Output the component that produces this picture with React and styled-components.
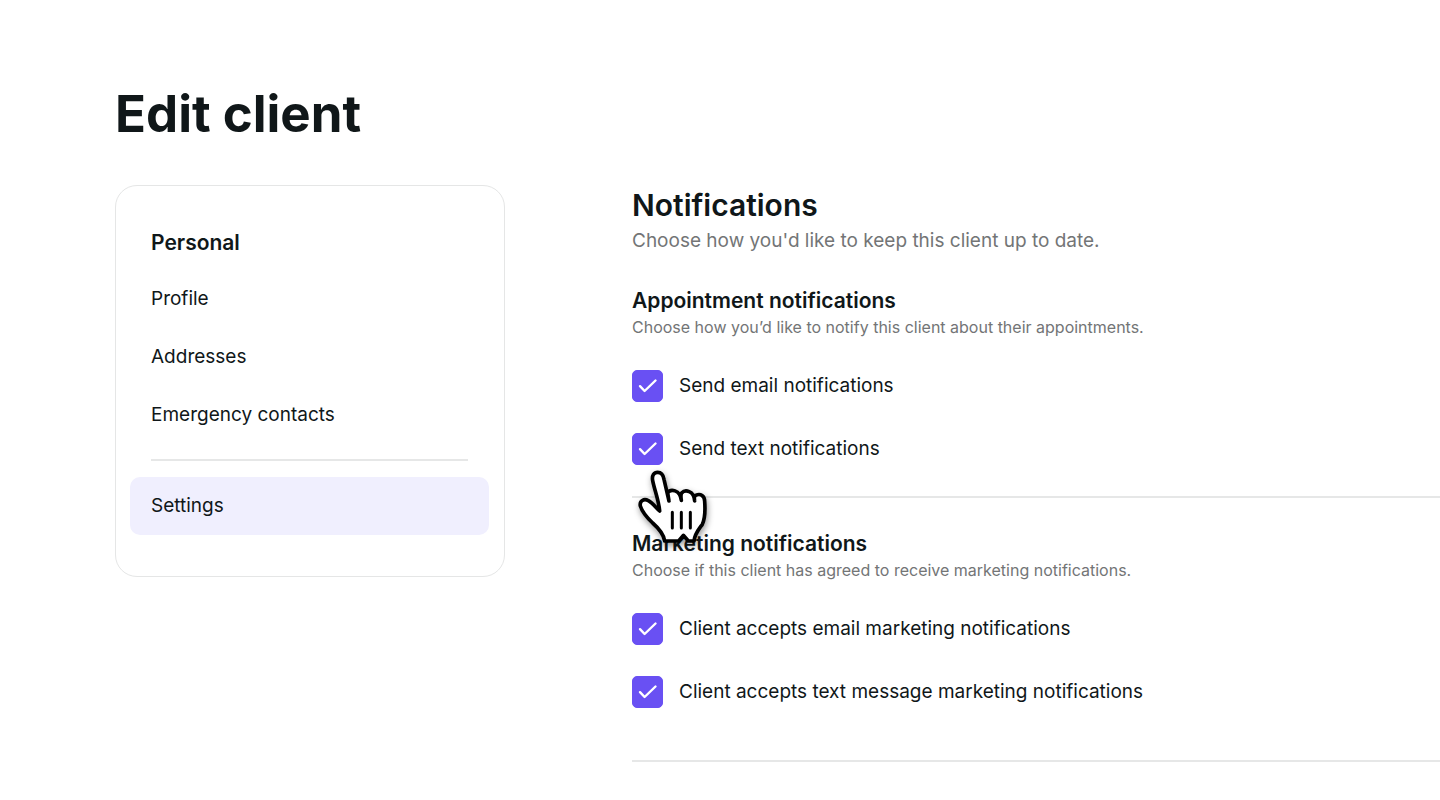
import React, { useState } from 'react';
import styled, { createGlobalStyle } from 'styled-components';

const GlobalStyle = createGlobalStyle`
    *, *::before, *::after {
        box-sizing: border-box;
    }
    body {
        margin: 0;
        background: #ffffff;
        color: #101719;
        font-family: 'Inter', 'Liberation Sans', sans-serif;
        overflow-x: hidden;
    }
`

const Page = styled.div`
    padding: 84px 0 36px 115px;
`

const PageTitle = styled.h1`
    margin: 0 0 41px;
    font-size: 51px;
    line-height: 60px;
    font-weight: 700;
`

const Columns = styled.div`
    display: grid;
    grid-template-columns: 390px minmax(0, 1fr);
    column-gap: 127px;
    align-items: start;
`

const SideNav = styled.nav`
    display: flex;
    flex-direction: column;
    padding: 42px 15px 41px 14px;
    border: 1px solid #e5e6e6;
    border-radius: 22px;
`

const NavTitle = styled.h2`
    margin: 0 0 12px;
    padding: 0 21px;
    font-size: 21px;
    line-height: 30px;
    font-weight: 600;
`

const NavLink = styled.a`
    padding: 0 21px;
    border-radius: 10px;
    font-size: 19px;
    line-height: 58px;
    color: inherit;
    text-decoration: none;
    background: ${({ $active }) => $active ? '#f0effe' : 'transparent'};
`

const NavDivider = styled.hr`
    margin: 15px 21px 16px;
    border: 0;
    border-top: 2px solid #e6e7e7;
`

const Content = styled.main`
    padding-top: 1px;
`

const Heading = styled.h2`
    margin: 0;
    font-size: 30px;
    line-height: 38px;
    font-weight: 600;
`

const Lead = styled.p`
    margin: 3px 0 31px;
    font-size: 19px;
    line-height: 28px;
    color: #737576;
`

const Section = styled.section`
    margin-bottom: 31px;
    border-bottom: 2px solid #e6e7e7;
    padding-bottom: 31px;

    &:last-child {
        margin-bottom: 0;
        padding-bottom: 52px;
    }
`

const SectionTitle = styled.h3`
    margin: 0;
    font-size: 21px;
    line-height: 30px;
    font-weight: 600;
`

const SectionText = styled.p`
    margin: 0 0 32px;
    font-size: 16px;
    line-height: 22px;
    color: #737576;
`

const CheckList = styled.div`
    display: flex;
    flex-direction: column;
    align-items: flex-start;
    gap: 31px;
`

const CheckLabel = styled.label`
    position: relative;
    display: flex;
    align-items: center;
    gap: 16px;
    font-size: 19px;
    line-height: 32px;
    cursor: pointer;
`

const CheckBox = styled.span`
    display: grid;
    width: 31px;
    height: 32px;

    & > * {
        grid-area: 1 / 1;
        width: 100%;
        height: 100%;
    }
    & > svg {
        pointer-events: none;
    }
`

const CheckInput = styled.input`
    appearance: none;
    margin: 0;
    border: 1px solid #6950f3;
    border-radius: 5px;
    cursor: pointer;

    &:checked {
        background: #6950f3;
    }
`

const Pointer = styled.svg`
    position: absolute;
    top: 35px;
    left: 4px;
    z-index: 1;
    overflow: visible;
    pointer-events: none;
    filter: drop-shadow(1px 3px 3px rgba(0, 0, 0, 0.4));
`

const HandPointer = () => (
    <Pointer width="76" height="80" viewBox="48 24 228 240" aria-hidden="true">
        <path
            d="M134 243C131 220 114 203 98 189C80 172 66 154 61 138C58 122 72 115 85 122C98 129 107 142 119 153C116 120 104 92 98 62C95 46 102 37 113 37C125 37 130 46 132 58L147 123L143 98C151 87 180 87 184 121C182 108 183 102 185 99C195 88 222 91 224 123C222 113 224 108 227 106C242 99 254 108 254 124C256 151 255 176 247 193C234 211 224 222 222 243H205L190 226L176 243Z"
            fill="#fff"
            stroke="#000"
            strokeWidth="11"
            strokeLinejoin="round"
        />
        <path
            d="M157 157V204M184 157V204M211 157V204"
            fill="none"
            stroke="#000"
            strokeWidth="9"
            strokeLinecap="round"
        />
    </Pointer>
)

const navLinks = ['Profile', 'Addresses', 'Emergency contacts'];

const sections = [
    {
        title: 'Appointment notifications',
        text: 'Choose how you’d like to notify this client about their appointments.',
        options: [
            { id: 'email', label: 'Send email notifications' },
            { id: 'text', label: 'Send text notifications', hovered: true },
        ],
    },
    {
        title: 'Marketing notifications',
        text: 'Choose if this client has agreed to receive marketing notifications.',
        options: [
            { id: 'marketingEmail', label: 'Client accepts email marketing notifications' },
            { id: 'marketingText', label: 'Client accepts text message marketing notifications' },
        ],
    },
];

const CheckOption = ({ id, label, hovered }) => {
    const [checked, setChecked] = useState(true);

    return (
        <CheckLabel htmlFor={id}>
            <CheckBox>
                <CheckInput
                    type="checkbox"
                    id={id}
                    checked={checked}
                    onChange={e => setChecked(e.target.checked)}
                />
                {checked && (
                    <svg viewBox="0 0 31 32" fill="none" aria-hidden="true">
                        <path d="M8 16.2L12.6 21L23.5 10.5" stroke="#fff" strokeWidth="2.4" strokeLinecap="round" strokeLinejoin="round" />
                    </svg>
                )}
            </CheckBox>
            {label}
            {hovered && <HandPointer />}
        </CheckLabel>
    );
}

export default function App() {
    return (
        <>
            <GlobalStyle />
            <Page>
                <PageTitle>Edit client</PageTitle>
                <Columns>
                    <SideNav>
                        <NavTitle>Personal</NavTitle>
                        {navLinks.map(link => <NavLink key={link} href="#">{link}</NavLink>)}
                        <NavDivider />
                        <NavLink href="#" $active>Settings</NavLink>
                    </SideNav>
                    <Content>
                        <Heading>Notifications</Heading>
                        <Lead>Choose how you'd like to keep this client up to date.</Lead>
                        {sections.map(({ title, text, options }) => (
                            <Section key={title}>
                                <SectionTitle>{title}</SectionTitle>
                                <SectionText>{text}</SectionText>
                                <CheckList>
                                    {options.map(option => <CheckOption key={option.id} {...option} />)}
                                </CheckList>
                            </Section>
                        ))}
                    </Content>
                </Columns>
            </Page>
        </>
    );
}
